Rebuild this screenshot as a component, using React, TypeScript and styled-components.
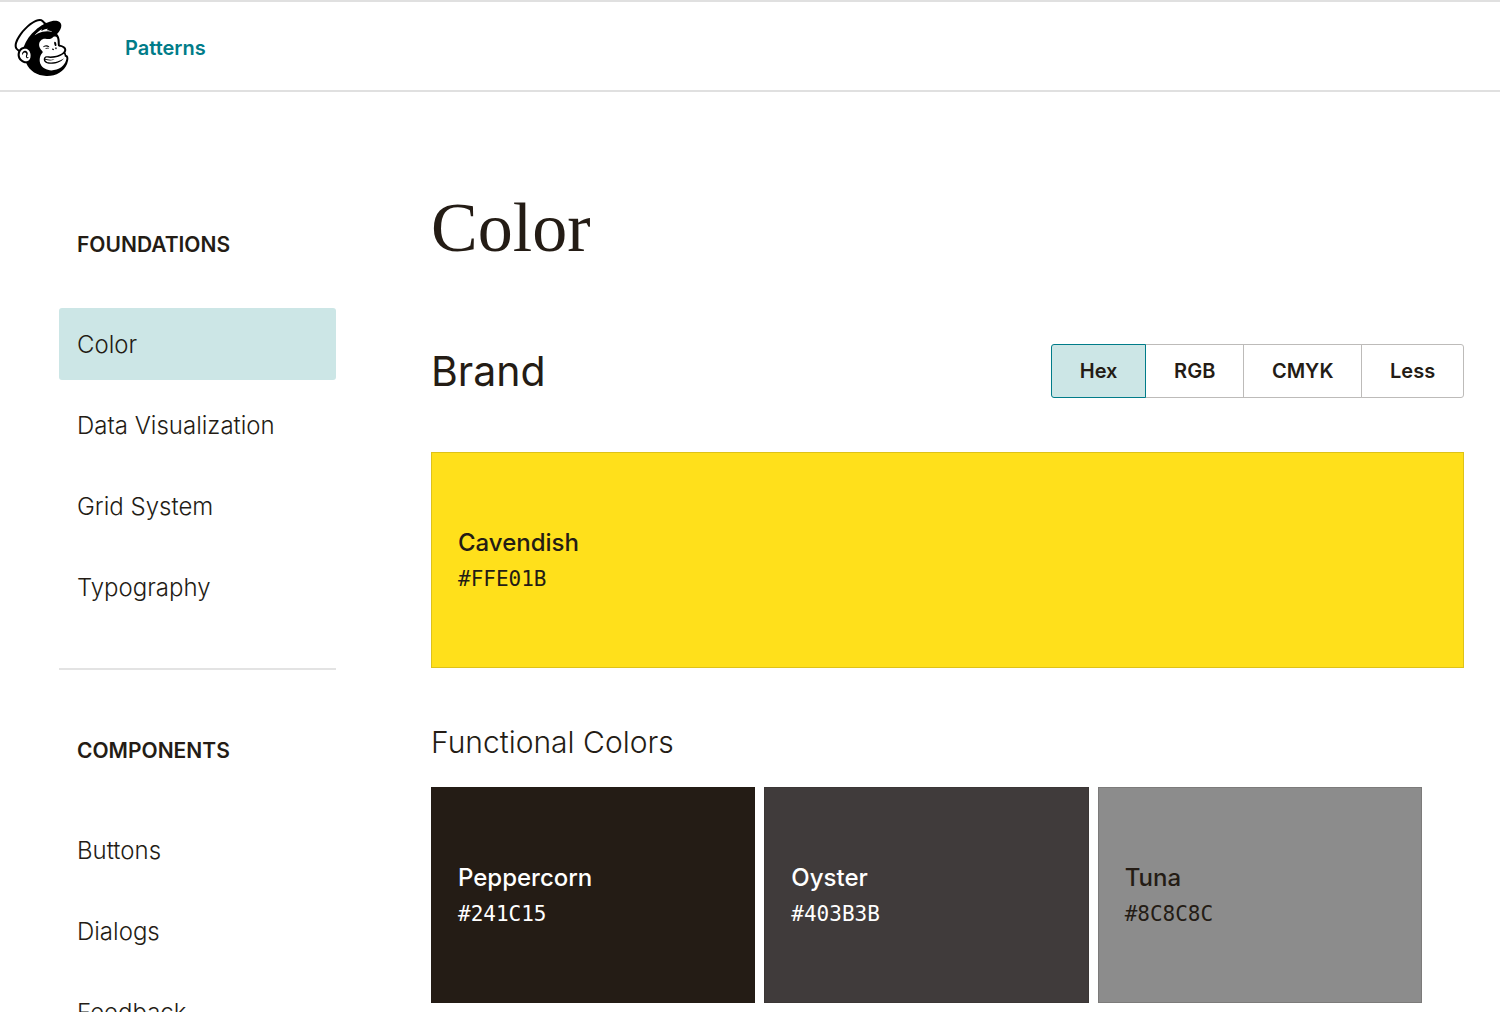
import React, { useState } from 'react';
import styled, { createGlobalStyle } from 'styled-components';
import { SiMailchimp } from 'react-icons/si';

const peppercorn = '#241c15';
const teal = '#007c89';
const mint = '#cce6e6';

const GlobalStyle = createGlobalStyle`
  *, *::before, *::after { box-sizing: border-box; }
  body {
    margin: 0;
    background: #fff;
    color: ${peppercorn};
    font-family: Inter, "Liberation Sans", sans-serif;
    -webkit-font-smoothing: antialiased;
  }
`;

const Header = styled.header`
  display: flex;
  align-items: center;
  gap: 55px;
  height: 92px;
  padding: 3px 13px 0;
  border-top: 2px solid #e0e0e0;
  border-bottom: 2px solid #e0e0e0;
`;

const LogoLink = styled.a`
  display: flex;
  color: #000;
`;

const SiteLink = styled.a`
  color: ${teal};
  font-size: 20px;
  line-height: 30px;
  font-weight: 600;
  text-decoration: none;
`;

const Page = styled.div`
  display: flex;
  align-items: flex-start;
  gap: 95px;
  padding: 0 36px 0 59px;
`;

const Sidebar = styled.nav`
  flex: 0 0 277px;
  padding-top: 138px;
`;

const NavGroup = styled.section`
  & + & {
    margin-top: 45px;
    padding-top: 66px;
    border-top: 2px solid #e3e3e3;
  }
`;

const NavHeading = styled.h2`
  margin: 0 0 48px;
  padding: 0 18px;
  font-size: 21px;
  line-height: 30px;
  font-weight: 600;
  text-transform: uppercase;
`;

const NavList = styled.ul`
  display: grid;
  gap: 9px;
  margin: 0;
  padding: 0;
  list-style: none;
`;

const NavLink = styled.a<{ $active: boolean }>`
  display: block;
  padding: 19px 18px 17px;
  border-radius: 3px;
  background: ${(p) => (p.$active ? mint : 'transparent')};
  color: ${peppercorn};
  font-size: 24px;
  line-height: 36px;
  font-weight: 350;
  text-decoration: none;
`;

const Main = styled.main`
  flex: 1;
  min-width: 0;
  padding: 90px 0 80px;
`;

const Title = styled.h1`
  margin: 0 0 70px;
  font-family: "Liberation Serif", serif;
  font-size: 70px;
  line-height: 92px;
  font-weight: 400;
`;

const SectionHeader = styled.div`
  display: flex;
  align-items: center;
  justify-content: space-between;
  margin-bottom: 54px;
`;

const SectionTitle = styled.h2`
  margin: 0;
  font-size: 41px;
  line-height: 54px;
  font-weight: 400;
`;

const SubTitle = styled.h3`
  margin: 56px 0 27px;
  font-size: 30px;
  line-height: 36px;
  font-weight: 350;
`;

const Segments = styled.div`
  display: flex;
  min-width: 413px;
`;

const Segment = styled.button<{ $active: boolean }>`
  flex: 1 0 auto;
  position: relative;
  z-index: ${(p) => (p.$active ? 1 : 0)};
  height: 54px;
  padding: 0 27px;
  border: 1px solid ${(p) => (p.$active ? teal : '#bdbbb9')};
  background: ${(p) => (p.$active ? mint : '#fff')};
  color: ${peppercorn};
  font-family: inherit;
  font-size: 20px;
  line-height: 30px;
  font-weight: 600;
  cursor: pointer;

  & + & { margin-left: -1px; }
  &:first-child { border-radius: 3px 0 0 3px; }
  &:last-child { border-radius: 0 3px 3px 0; }
`;

const SwatchGrid = styled.div`
  display: grid;
  grid-template-columns: repeat(3, 1fr);
  gap: 9px;
  padding-right: 42px;
`;

const Swatch = styled.div<{ $fill: string; $light?: boolean }>`
  padding: 73px 27px 71px;
  background: ${(p) => p.$fill};
  box-shadow: inset 0 0 0 1px rgba(36, 28, 21, 0.15);
  color: ${(p) => (p.$light ? '#fff' : peppercorn)};
`;

const SwatchName = styled.div`
  font-size: 24px;
  line-height: 36px;
  font-weight: 550;
`;

const SwatchValue = styled.div`
  font-family: "DejaVu Sans Mono", monospace;
  font-size: 21px;
  line-height: 36px;
`;

const groups = [
  { heading: 'Foundations', links: ['Color', 'Data Visualization', 'Grid System', 'Typography'] },
  { heading: 'Components', links: ['Buttons', 'Dialogs', 'Feedback'] },
];

const formats = ['Hex', 'RGB', 'CMYK', 'Less'];

const functional = [
  { name: 'Peppercorn', value: '#241C15', light: true },
  { name: 'Oyster', value: '#403B3B', light: true },
  { name: 'Tuna', value: '#8C8C8C', light: false },
];

export default function App() {
  const [format, setFormat] = useState('Hex');

  return (
    <>
      <GlobalStyle />
      <Header>
        <LogoLink href="#home" aria-label="Mailchimp">
          <SiMailchimp size={57} />
        </LogoLink>
        <SiteLink href="#patterns">Patterns</SiteLink>
      </Header>
      <Page>
        <Sidebar>
          {groups.map((group) => (
            <NavGroup key={group.heading}>
              <NavHeading>{group.heading}</NavHeading>
              <NavList>
                {group.links.map((label) => (
                  <li key={label}>
                    <NavLink href={`#${label}`} $active={label === 'Color'}>
                      {label}
                    </NavLink>
                  </li>
                ))}
              </NavList>
            </NavGroup>
          ))}
        </Sidebar>
        <Main>
          <Title>Color</Title>
          <SectionHeader>
            <SectionTitle>Brand</SectionTitle>
            <Segments>
              {formats.map((label) => (
                <Segment
                  key={label}
                  type="button"
                  $active={label === format}
                  aria-pressed={label === format}
                  onClick={() => setFormat(label)}
                >
                  {label}
                </Segment>
              ))}
            </Segments>
          </SectionHeader>
          <Swatch $fill="#ffe01b">
            <SwatchName>Cavendish</SwatchName>
            <SwatchValue>#FFE01B</SwatchValue>
          </Swatch>
          <SubTitle>Functional Colors</SubTitle>
          <SwatchGrid>
            {functional.map((color) => (
              <Swatch key={color.name} $fill={color.value} $light={color.light}>
                <SwatchName>{color.name}</SwatchName>
                <SwatchValue>{color.value}</SwatchValue>
              </Swatch>
            ))}
          </SwatchGrid>
        </Main>
      </Page>
    </>
  );
}
